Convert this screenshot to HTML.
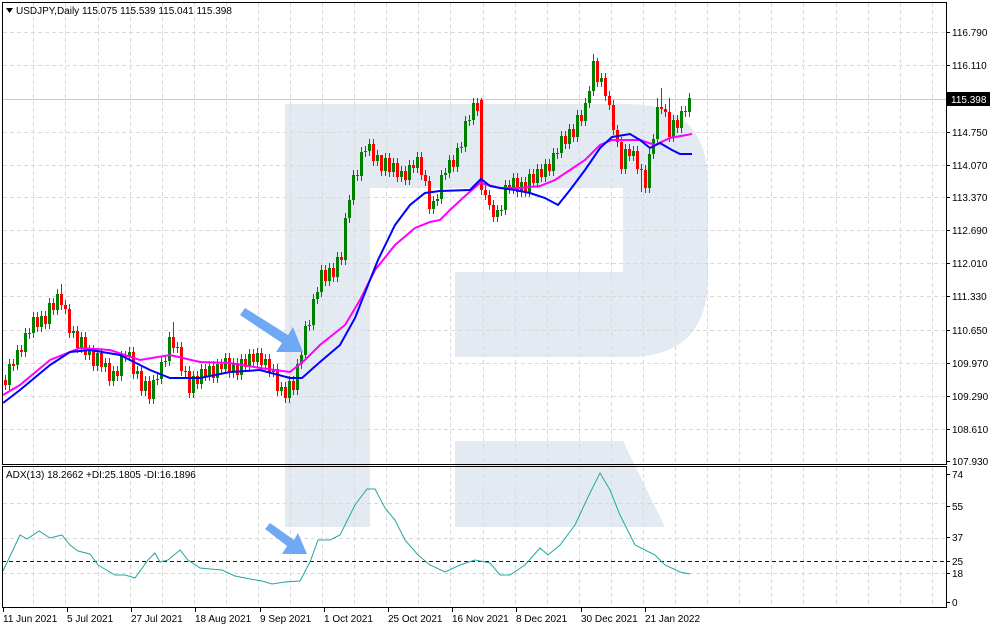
<!DOCTYPE html>
<html><head><meta charset="utf-8"><style>
html,body{margin:0;padding:0;background:#fff;width:993px;height:630px;overflow:hidden}
svg{display:block}
text{font-family:"Liberation Sans",sans-serif;font-size:10px;fill:#000}
</style></head><body>
<svg width="993" height="630" xmlns="http://www.w3.org/2000/svg">
<rect width="993" height="630" fill="#fff"/>
<path d="M285 104 H628 Q708 104 708 184 V277 Q708 357 628 357 H455 V272 H623 V188 H370 V527 H285 Z" fill="#e4eaf2"/>
<path d="M455 441 H623 L665 527 H455 Z" fill="#e4eaf2"/>
<g stroke="#d9d9d9" stroke-dasharray="4,3" fill="none">
<path d="M33.5 3V464M65.5 3V464M98.5 3V464M130.5 3V464M162.5 3V464M194.5 3V464M226.5 3V464M258.5 3V464M290.5 3V464M322.5 3V464M354.5 3V464M386.5 3V464M418.5 3V464M450.5 3V464M483.5 3V464M515.5 3V464M547.5 3V464M579.5 3V464M611.5 3V464M643.5 3V464M675.5 3V464M707.5 3V464M739.5 3V464M771.5 3V464M803.5 3V464M836.5 3V464M868.5 3V464M900.5 3V464M932.5 3V464"/>
<path d="M33.5 467V607M65.5 467V607M98.5 467V607M130.5 467V607M162.5 467V607M194.5 467V607M226.5 467V607M258.5 467V607M290.5 467V607M322.5 467V607M354.5 467V607M386.5 467V607M418.5 467V607M450.5 467V607M483.5 467V607M515.5 467V607M547.5 467V607M579.5 467V607M611.5 467V607M643.5 467V607M675.5 467V607M707.5 467V607M739.5 467V607M771.5 467V607M803.5 467V607M836.5 467V607M868.5 467V607M900.5 467V607M932.5 467V607"/>
<path d="M3 32.5H946M3 65.5H946M3 132.5H946M3 165.5H946M3 197.5H946M3 230.5H946M3 263.5H946M3 296.5H946M3 330.5H946M3 363.5H946M3 396.5H946M3 429.5H946M3 503.5H946M3 538.5H946M3 573.5H946"/>
</g>
<line x1="2" y1="99.5" x2="946" y2="99.5" stroke="#c8c8c8"/>
<line x1="2" y1="561.5" x2="946" y2="561.5" stroke="#0000c8" stroke-dasharray="4,3"/>
<!-- green candles -->
<path stroke="#008000" fill="none" d="M9.5 359V390M17.5 345V370M25.5 328V357M33.5 312V338M41.5 311V332M49.5 298V329M57.5 289V315M73.5 326V338M81.5 332V353M89.5 345V360M97.5 348V371M105.5 358V372M113.5 366V386M121.5 351V381M129.5 347V361M137.5 366V379M145.5 376V396M153.5 375V404M157.5 374V385M161.5 357V384M165.5 356V367M169.5 332V366M177.5 342V353M193.5 371V398M201.5 364V389M209.5 361V381M217.5 359V383M225.5 353V374M233.5 358V378M241.5 354V380M249.5 349V372M257.5 348V367M265.5 354V370M273.5 364V377M281.5 382V396M289.5 376V403M297.5 359V395M301.5 350V369M305.5 321V360M309.5 320V331M313.5 294V330M317.5 287V304M321.5 265V297M329.5 263V286M337.5 252V282M345.5 213V265M349.5 195V223M353.5 170V205M361.5 147V181M365.5 146V157M369.5 139V156M377.5 150V166M385.5 153V176M393.5 158V177M401.5 166V182M409.5 160V185M417.5 152V173M433.5 196V214M437.5 194V206M441.5 170V204M445.5 168V180M449.5 155V178M457.5 143V172M461.5 142V153M465.5 116V152M469.5 115V126M473.5 98V125M497.5 205V222M501.5 205V216M505.5 180V215M513.5 173V194M521.5 177V197M529.5 169V197M537.5 164V188M545.5 159V182M553.5 148V176M557.5 148V159M561.5 131V158M569.5 124V149M577.5 110V142M585.5 98V126M589.5 86V108M593.5 54V96M601.5 73V87M625.5 144V174M633.5 146V161M641.5 164V192M649.5 149V193M653.5 134V159M657.5 98V144M673.5 115V142M681.5 106V133M689.5 93V117"/>
<path fill="#008000" d="M8 364h3V385h-3zM16 350h3V365h-3zM24 333h3V352h-3zM32 317h3V333h-3zM40 316h3V327h-3zM48 303h3V324h-3zM56 294h3V310h-3zM72 331h3V333h-3zM80 337h3V348h-3zM88 350h3V355h-3zM96 353h3V366h-3zM104 363h3V367h-3zM112 371h3V381h-3zM120 356h3V376h-3zM128 352h3V356h-3zM136 371h3V374h-3zM144 381h3V391h-3zM152 380h3V399h-3zM156 379h3V380h-3zM160 362h3V379h-3zM164 361h3V362h-3zM168 337h3V361h-3zM176 347h3V348h-3zM192 376h3V393h-3zM200 369h3V384h-3zM208 366h3V376h-3zM216 364h3V378h-3zM224 358h3V369h-3zM232 363h3V373h-3zM240 359h3V375h-3zM248 354h3V367h-3zM256 353h3V362h-3zM264 359h3V365h-3zM272 369h3V372h-3zM280 387h3V391h-3zM288 381h3V398h-3zM296 364h3V390h-3zM300 355h3V364h-3zM304 326h3V355h-3zM308 325h3V326h-3zM312 299h3V325h-3zM316 292h3V299h-3zM320 270h3V292h-3zM328 268h3V281h-3zM336 257h3V277h-3zM344 218h3V260h-3zM348 200h3V218h-3zM352 175h3V200h-3zM360 152h3V176h-3zM364 151h3V152h-3zM368 144h3V151h-3zM376 155h3V161h-3zM384 158h3V171h-3zM392 163h3V172h-3zM400 171h3V177h-3zM408 165h3V180h-3zM416 157h3V168h-3zM432 201h3V209h-3zM436 199h3V201h-3zM440 175h3V199h-3zM444 173h3V175h-3zM448 160h3V173h-3zM456 148h3V167h-3zM460 147h3V148h-3zM464 121h3V147h-3zM468 120h3V121h-3zM472 103h3V120h-3zM496 210h3V217h-3zM500 210h3V211h-3zM504 185h3V210h-3zM512 178h3V189h-3zM520 182h3V192h-3zM528 174h3V192h-3zM536 169h3V183h-3zM544 164h3V177h-3zM552 153h3V171h-3zM556 153h3V154h-3zM560 136h3V153h-3zM568 129h3V144h-3zM576 115h3V137h-3zM584 103h3V121h-3zM588 91h3V103h-3zM592 61h3V91h-3zM600 78h3V82h-3zM624 149h3V169h-3zM632 151h3V156h-3zM640 169h3V170h-3zM648 154h3V188h-3zM652 139h3V154h-3zM656 107h3V139h-3zM672 120h3V137h-3zM680 111h3V128h-3zM688 98h3V112h-3z"/>
<!-- red candles -->
<path stroke="#ff0000" fill="none" d="M5.5 375V390M13.5 359V371M21.5 345V357M29.5 328V339M37.5 312V332M45.5 311V329M53.5 298V315M61.5 284V310M65.5 300V314M69.5 304V338M77.5 326V353M85.5 332V360M93.5 345V371M101.5 348V372M109.5 358V386M117.5 366V381M125.5 351V362M133.5 347V379M141.5 366V396M149.5 376V404M173.5 322V353M181.5 342V376M185.5 366V377M189.5 366V398M197.5 371V389M205.5 364V381M213.5 361V383M221.5 359V374M229.5 353V378M237.5 358V380M245.5 354V372M253.5 349V367M261.5 348V370M269.5 354V377M277.5 364V396M285.5 382V403M293.5 376V395M325.5 265V286M333.5 263V282M341.5 252V265M357.5 170V181M373.5 139V166M381.5 155V176M389.5 153V177M397.5 158V182M405.5 166V185M413.5 160V173M421.5 152V180M425.5 170V186M429.5 176V214M453.5 155V172M477.5 98V116M481.5 98V195M485.5 185V200M489.5 190V210M493.5 200V222M509.5 180V194M517.5 173V197M525.5 177V197M533.5 169V188M541.5 164V182M549.5 159V176M565.5 131V149M573.5 124V142M581.5 110V126M597.5 58V87M605.5 73V101M609.5 91V110M613.5 100V135M617.5 125V147M621.5 137V174M629.5 144V161M637.5 146V174M645.5 165V193M661.5 88V114M665.5 104V117M669.5 98V142M677.5 115V133M685.5 106V117"/>
<path fill="#ff0000" d="M4 380h3V385h-3zM12 364h3V366h-3zM20 350h3V352h-3zM28 333h3V334h-3zM36 317h3V327h-3zM44 316h3V324h-3zM52 303h3V310h-3zM60 294h3V305h-3zM64 305h3V309h-3zM68 309h3V333h-3zM76 331h3V348h-3zM84 337h3V355h-3zM92 350h3V366h-3zM100 353h3V367h-3zM108 363h3V381h-3zM116 371h3V376h-3zM124 356h3V357h-3zM132 352h3V374h-3zM140 371h3V391h-3zM148 381h3V399h-3zM172 337h3V348h-3zM180 347h3V371h-3zM184 371h3V372h-3zM188 371h3V393h-3zM196 376h3V384h-3zM204 369h3V376h-3zM212 366h3V378h-3zM220 364h3V369h-3zM228 358h3V373h-3zM236 363h3V375h-3zM244 359h3V367h-3zM252 354h3V362h-3zM260 353h3V365h-3zM268 359h3V372h-3zM276 369h3V391h-3zM284 387h3V398h-3zM292 381h3V390h-3zM324 270h3V281h-3zM332 268h3V277h-3zM340 257h3V260h-3zM356 175h3V176h-3zM372 144h3V161h-3zM380 155h3V171h-3zM388 158h3V172h-3zM396 163h3V177h-3zM404 171h3V180h-3zM412 165h3V168h-3zM420 157h3V175h-3zM424 175h3V181h-3zM428 181h3V209h-3zM452 160h3V167h-3zM476 103h3V111h-3zM480 100h3V190h-3zM484 190h3V195h-3zM488 195h3V205h-3zM492 205h3V217h-3zM508 185h3V189h-3zM516 178h3V192h-3zM524 182h3V192h-3zM532 174h3V183h-3zM540 169h3V177h-3zM548 164h3V171h-3zM564 136h3V144h-3zM572 129h3V137h-3zM580 115h3V121h-3zM596 61h3V82h-3zM604 78h3V96h-3zM608 96h3V105h-3zM612 105h3V130h-3zM616 130h3V142h-3zM620 142h3V169h-3zM628 149h3V156h-3zM636 151h3V169h-3zM644 170h3V188h-3zM660 107h3V109h-3zM664 109h3V112h-3zM668 112h3V137h-3zM676 120h3V128h-3zM684 111h3V112h-3z"/>
<polyline fill="none" stroke="#ff00ff" stroke-width="2" points="3,395 20,385 50,360 80,348 110,350 140,360 170,355 200,362 230,363 260,368 290,372 305,360 320,345 345,325 360,300 375,270 395,245 415,228 430,222 440,220 450,210 465,196 480,183 500,188 520,188 540,186 555,180 570,170 585,160 600,145 612,140 640,140 655,145 670,138 692,134"/>
<polyline fill="none" stroke="#0000ff" stroke-width="2" points="3,403 20,390 50,365 70,352 90,350 120,355 150,370 170,378 200,378 230,372 260,370 290,378 302,378 320,362 340,345 355,318 368,285 378,260 395,225 410,205 425,193 440,191 470,190 481,179 490,186 500,188 515,190 530,193 545,198 558,205 570,190 585,170 600,148 612,137 630,134 640,140 650,148 660,143 672,150 680,154 692,154"/>
<polyline fill="none" stroke="#20a8a0" stroke-width="1" points="3,571 12,552 20,535 27,539 39,531 50,538 62,535 70,545 78,551 90,554 98,565 103,568 115,575 125,575 135,578 148,560 155,553 160,562 168,560 180,550 188,560 200,568 210,569 222,570 235,576 250,579 262,581 272,584 285,582 300,581 310,562 318,540 330,540 340,535 355,505 367,489 375,489 385,508 395,520 405,540 418,555 430,565 445,572 460,565 475,560 490,563 500,575 510,575 525,565 540,548 548,555 560,545 575,525 588,497 600,473 610,490 620,515 635,545 645,550 655,555 665,565 680,572 690,574"/>
<g fill="#6fa8f5">
<path d="M240 315 L245 308 L288 335 L293 327 L303 352 L276 352 L282 343 Z"/>
<path d="M265 529 L270 523 L294 540 L298 533 L307 554 L282 554 L287 546 Z"/>
</g>
<g fill="none" stroke="#000">
<rect x="2.5" y="2.5" width="944" height="462"/>
<rect x="2.5" y="466.5" width="944" height="141"/>
<path d="M947 32.5h3M947 65.5h3M947 132.5h3M947 165.5h3M947 197.5h3M947 230.5h3M947 263.5h3M947 296.5h3M947 330.5h3M947 363.5h3M947 396.5h3M947 429.5h3M947 461.5h3M947 474.5h3M947 506.5h3M947 537.5h3M947 561.5h3M947 573.5h3M947 602.5h3"/>
<path d="M3.5 608v4M67.5 608v4M131.5 608v4M195.5 608v4M260.5 608v4M324.5 608v4M388.5 608v4M452.5 608v4M516.5 608v4M581.5 608v4M645.5 608v4"/>
</g>
<text x="952" y="36">116.790</text>
<text x="952" y="69">116.110</text>
<text x="952" y="136">114.750</text>
<text x="952" y="169">114.070</text>
<text x="952" y="201">113.370</text>
<text x="952" y="234">112.690</text>
<text x="952" y="267">112.010</text>
<text x="952" y="300">111.330</text>
<text x="952" y="334">110.650</text>
<text x="952" y="367">109.970</text>
<text x="952" y="400">109.290</text>
<text x="952" y="433">108.610</text>
<text x="952" y="465">107.930</text>
<text x="952" y="478">74</text>
<text x="952" y="510">55</text>
<text x="952" y="541">37</text>
<text x="952" y="565">25</text>
<text x="952" y="577">18</text>
<text x="952" y="606">0</text>
<text x="3" y="622">11 Jun 2021</text>
<text x="67" y="622">5 Jul 2021</text>
<text x="131" y="622">27 Jul 2021</text>
<text x="195" y="622">18 Aug 2021</text>
<text x="260" y="622">9 Sep 2021</text>
<text x="324" y="622">1 Oct 2021</text>
<text x="388" y="622">25 Oct 2021</text>
<text x="452" y="622">16 Nov 2021</text>
<text x="516" y="622">8 Dec 2021</text>
<text x="581" y="622">30 Dec 2021</text>
<text x="645" y="622">21 Jan 2022</text>
<rect x="947" y="92" width="43" height="14" fill="#000"/>
<text x="951" y="103" style="fill:#fff">115.398</text>
<path d="M6 8 L13 8 L9.5 13 Z" fill="#000"/>
<text x="16" y="14">USDJPY,Daily  115.075 115.539 115.041 115.398</text>
<text x="6" y="478">ADX(13) 18.2662 +DI:25.1805 -DI:16.1896</text>
</svg>
</body></html>
